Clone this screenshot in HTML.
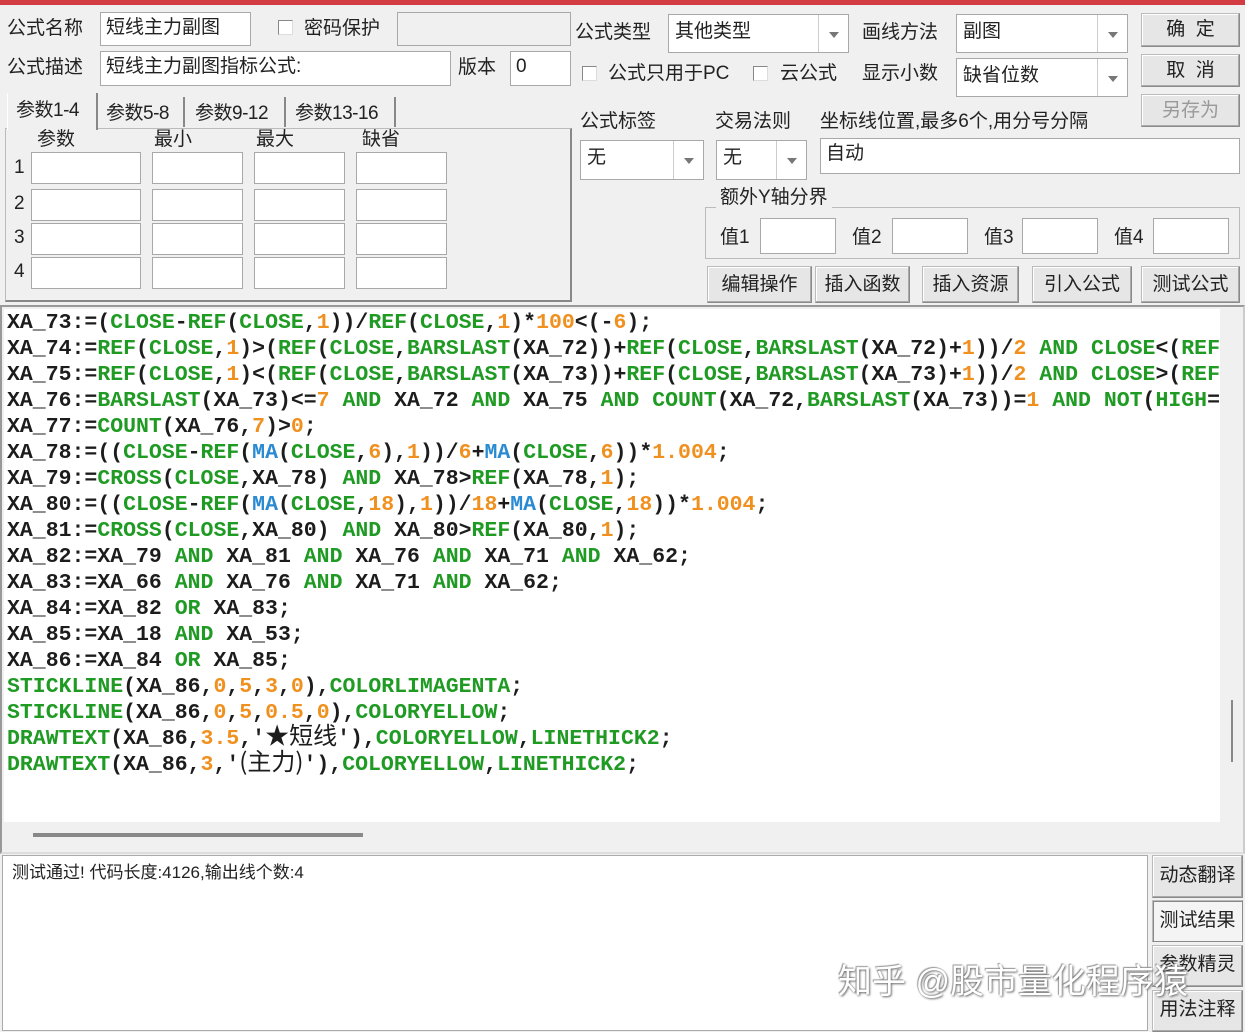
<!DOCTYPE html>
<html><head><meta charset="utf-8">
<style>
*{box-sizing:border-box;margin:0;padding:0}
body{width:1245px;height:1032px;background:#f0f0f0;position:relative;overflow:hidden;font-family:"Liberation Sans","Noto Sans CJK SC",sans-serif;font-size:19px;color:#222}
.a{position:absolute}
.t{position:absolute;white-space:nowrap;line-height:22px}
.in{position:absolute;background:#fff;border:1px solid #a8a8a8;padding:3px 5px;white-space:nowrap;line-height:24px}
.dis{background:#f0f0f0}
.cb{position:absolute;width:15px;height:15px;background:#fff;border:1px solid #888;border-right-color:#ddd;border-bottom-color:#ddd}
.cmb{position:absolute;background:#fff;border:1px solid #a8a8a8;padding:4px 6px;line-height:26px;white-space:nowrap}
.cmb .dd{position:absolute;right:0;top:0;bottom:0;width:30px;border-left:1px solid #ccc;background:#fff}
.cmb .dd:after{content:"";position:absolute;left:10px;top:50%;margin-top:-2px;border-left:5px solid transparent;border-right:5px solid transparent;border-top:6px solid #777}
.btn{position:absolute;background:#e6e6e6;border:1px solid #8a8a8a;border-top-color:#bbb;border-left-color:#bbb;box-shadow:inset -1px -1px 0 #aaa,inset 1px 1px 0 #fff;text-align:center;white-space:nowrap;font-size:19px}
.code{position:absolute;left:7px;top:1px;font-family:"Liberation Mono","Noto Sans CJK SC",monospace;font-weight:bold;font-size:21.5px;line-height:26px;color:#1c1c1c;white-space:pre}
.g{color:#1f9b24}.o{color:#f0901e}.b{color:#2a8bd2}
.cj{font-weight:normal;font-family:"Noto Sans CJK SC",sans-serif;font-size:24px;line-height:0}
.tab{font-size:19px;letter-spacing:-0.5px}
</style></head><body>
<div class="a" style="left:0;top:0;width:1245px;height:5px;background:#d23c42"></div>

<div class="t" style="left:7px;top:18px">公式名称</div>
<div class="in" style="left:100px;top:12px;width:151px;height:34px">短线主力副图</div>
<div class="cb" style="left:278px;top:20px"></div>
<div class="t" style="left:304px;top:18px">密码保护</div>
<div class="in dis" style="left:397px;top:12px;width:174px;height:34px"></div>
<div class="t" style="left:7px;top:57px">公式描述</div>
<div class="in" style="left:100px;top:51px;width:351px;height:35px">短线主力副图指标公式:</div>
<div class="t" style="left:458px;top:57px">版本</div>
<div class="in" style="left:510px;top:51px;width:61px;height:35px">0</div>

<div class="a" style="left:5px;top:128px;width:567px;height:174px;border:1px solid #bbb;border-right:2px solid #888;border-bottom:2px solid #888"></div>
<div class="a" style="left:7px;top:93px;width:91px;height:37px;background:#f0f0f0;border-left:1px solid #fff;border-right:2px solid #888"></div>
<div class="t tab" style="left:16px;top:100px">参数1-4</div>
<div class="t tab" style="left:106px;top:103px">参数5-8</div>
<div class="a" style="left:183px;top:97px;height:30px;border-left:2px solid #888"></div>
<div class="t tab" style="left:195px;top:103px">参数9-12</div>
<div class="a" style="left:284px;top:97px;height:30px;border-left:2px solid #888"></div>
<div class="t tab" style="left:295px;top:103px">参数13-16</div>
<div class="a" style="left:394px;top:97px;height:30px;border-left:2px solid #888"></div>
<div class="t" style="left:37px;top:129px">参数</div>
<div class="t" style="left:154px;top:129px">最小</div>
<div class="t" style="left:256px;top:129px">最大</div>
<div class="t" style="left:362px;top:129px">缺省</div>
<div class="t" style="left:14px;top:157px">1</div><div class="t" style="left:14px;top:193px">2</div><div class="t" style="left:14px;top:227px">3</div><div class="t" style="left:14px;top:261px">4</div>
<div class="in" style="left:31px;top:152px;width:110px;height:32px"></div><div class="in" style="left:152px;top:152px;width:91px;height:32px"></div><div class="in" style="left:254px;top:152px;width:91px;height:32px"></div><div class="in" style="left:356px;top:152px;width:91px;height:32px"></div>
<div class="in" style="left:31px;top:189px;width:110px;height:32px"></div><div class="in" style="left:152px;top:189px;width:91px;height:32px"></div><div class="in" style="left:254px;top:189px;width:91px;height:32px"></div><div class="in" style="left:356px;top:189px;width:91px;height:32px"></div>
<div class="in" style="left:31px;top:223px;width:110px;height:32px"></div><div class="in" style="left:152px;top:223px;width:91px;height:32px"></div><div class="in" style="left:254px;top:223px;width:91px;height:32px"></div><div class="in" style="left:356px;top:223px;width:91px;height:32px"></div>
<div class="in" style="left:31px;top:257px;width:110px;height:32px"></div><div class="in" style="left:152px;top:257px;width:91px;height:32px"></div><div class="in" style="left:254px;top:257px;width:91px;height:32px"></div><div class="in" style="left:356px;top:257px;width:91px;height:32px"></div>

<div class="t" style="left:575px;top:22px">公式类型</div>
<div class="cmb" style="left:668px;top:14px;width:181px;height:39px">其他类型<span class="dd"></span></div>
<div class="t" style="left:862px;top:22px">画线方法</div>
<div class="cmb" style="left:956px;top:14px;width:172px;height:39px">副图<span class="dd"></span></div>
<div class="btn" style="left:1141px;top:13px;width:99px;height:34px;line-height:32px">确&nbsp;&nbsp;定</div>
<div class="cb" style="left:582px;top:66px"></div>
<div class="t" style="left:608px;top:63px">公式只用于PC</div>
<div class="cb" style="left:753px;top:66px"></div>
<div class="t" style="left:780px;top:63px">云公式</div>
<div class="t" style="left:862px;top:63px">显示小数</div>
<div class="cmb" style="left:956px;top:58px;width:172px;height:39px">缺省位数<span class="dd"></span></div>
<div class="btn" style="left:1141px;top:54px;width:99px;height:33px;line-height:31px">取&nbsp;&nbsp;消</div>
<div class="btn" style="left:1141px;top:94px;width:99px;height:33px;line-height:31px;color:#999">另存为</div>

<div class="t" style="left:580px;top:111px">公式标签</div>
<div class="t" style="left:715px;top:111px">交易法则</div>
<div class="t" style="left:820px;top:111px">坐标线位置,最多6个,用分号分隔</div>
<div class="cmb" style="left:580px;top:140px;width:124px;height:40px">无<span class="dd"></span></div>
<div class="cmb" style="left:716px;top:140px;width:91px;height:40px">无<span class="dd"></span></div>
<div class="in" style="left:820px;top:138px;width:420px;height:36px">自动</div>

<div class="a" style="left:705px;top:207px;width:535px;height:52px;border:1px solid #bbb"></div>
<div class="t" style="left:716px;top:187px;background:#f0f0f0;padding:0 4px">额外Y轴分界</div>
<div class="t" style="left:720px;top:227px">值1</div><div class="in" style="left:760px;top:218px;width:76px;height:36px"></div>
<div class="t" style="left:852px;top:227px">值2</div><div class="in" style="left:892px;top:218px;width:76px;height:36px"></div>
<div class="t" style="left:984px;top:227px">值3</div><div class="in" style="left:1022px;top:218px;width:76px;height:36px"></div>
<div class="t" style="left:1114px;top:227px">值4</div><div class="in" style="left:1153px;top:218px;width:76px;height:36px"></div>

<div class="btn" style="left:707px;top:266px;width:105px;height:37px;line-height:35px">编辑操作</div>
<div class="btn" style="left:815px;top:266px;width:95px;height:37px;line-height:35px">插入函数</div>
<div class="btn" style="left:922px;top:266px;width:97px;height:37px;line-height:35px">插入资源</div>
<div class="btn" style="left:1032px;top:266px;width:100px;height:37px;line-height:35px">引入公式</div>
<div class="btn" style="left:1141px;top:266px;width:99px;height:37px;line-height:35px">测试公式</div>

<div class="a" style="left:0;top:305px;width:1245px;height:549px;border:2px solid #999;border-right-color:#ccc;border-bottom-color:#ddd;background:#f0f0f0"></div>
<div class="a" style="left:4px;top:309px;width:1216px;height:513px;background:#fff"></div>
<div class="a" style="left:1231px;top:700px;width:2px;height:62px;background:#888"></div>
<div class="a" style="left:33px;top:833px;width:330px;height:4px;background:#888"></div>
<div class="a" style="left:4px;top:309px;width:1216px;height:513px;overflow:hidden"><div class="code" style="left:3px"><span>XA_73:=(<span class="g">CLOSE</span>-<span class="g">REF</span>(<span class="g">CLOSE</span>,<span class="o">1</span>))/<span class="g">REF</span>(<span class="g">CLOSE</span>,<span class="o">1</span>)*<span class="o">100</span>&lt;(-<span class="o">6</span>);</span>
XA_74:=<span class="g">REF</span>(<span class="g">CLOSE</span>,<span class="o">1</span>)&gt;(<span class="g">REF</span>(<span class="g">CLOSE</span>,<span class="g">BARSLAST</span>(XA_72))+<span class="g">REF</span>(<span class="g">CLOSE</span>,<span class="g">BARSLAST</span>(XA_72)+<span class="o">1</span>))/<span class="o">2</span> <span class="g">AND</span> <span class="g">CLOSE</span>&lt;(<span class="g">REF</span>
XA_75:=<span class="g">REF</span>(<span class="g">CLOSE</span>,<span class="o">1</span>)&lt;(<span class="g">REF</span>(<span class="g">CLOSE</span>,<span class="g">BARSLAST</span>(XA_73))+<span class="g">REF</span>(<span class="g">CLOSE</span>,<span class="g">BARSLAST</span>(XA_73)+<span class="o">1</span>))/<span class="o">2</span> <span class="g">AND</span> <span class="g">CLOSE</span>&gt;(<span class="g">REF</span>
XA_76:=<span class="g">BARSLAST</span>(XA_73)&lt;=<span class="o">7</span> <span class="g">AND</span> XA_72 <span class="g">AND</span> XA_75 <span class="g">AND</span> <span class="g">COUNT</span>(XA_72,<span class="g">BARSLAST</span>(XA_73))=<span class="o">1</span> <span class="g">AND</span> <span class="g">NOT</span>(<span class="g">HIGH</span>=
XA_77:=<span class="g">COUNT</span>(XA_76,<span class="o">7</span>)&gt;<span class="o">0</span>;
XA_78:=((<span class="g">CLOSE</span>-<span class="g">REF</span>(<span class="b">MA</span>(<span class="g">CLOSE</span>,<span class="o">6</span>),<span class="o">1</span>))/<span class="o">6</span>+<span class="b">MA</span>(<span class="g">CLOSE</span>,<span class="o">6</span>))*<span class="o">1.004</span>;
XA_79:=<span class="g">CROSS</span>(<span class="g">CLOSE</span>,XA_78) <span class="g">AND</span> XA_78&gt;<span class="g">REF</span>(XA_78,<span class="o">1</span>);
XA_80:=((<span class="g">CLOSE</span>-<span class="g">REF</span>(<span class="b">MA</span>(<span class="g">CLOSE</span>,<span class="o">18</span>),<span class="o">1</span>))/<span class="o">18</span>+<span class="b">MA</span>(<span class="g">CLOSE</span>,<span class="o">18</span>))*<span class="o">1.004</span>;
XA_81:=<span class="g">CROSS</span>(<span class="g">CLOSE</span>,XA_80) <span class="g">AND</span> XA_80&gt;<span class="g">REF</span>(XA_80,<span class="o">1</span>);
XA_82:=XA_79 <span class="g">AND</span> XA_81 <span class="g">AND</span> XA_76 <span class="g">AND</span> XA_71 <span class="g">AND</span> XA_62;
XA_83:=XA_66 <span class="g">AND</span> XA_76 <span class="g">AND</span> XA_71 <span class="g">AND</span> XA_62;
XA_84:=XA_82 <span class="g">OR</span> XA_83;
XA_85:=XA_18 <span class="g">AND</span> XA_53;
XA_86:=XA_84 <span class="g">OR</span> XA_85;
<span class="g">STICKLINE</span>(XA_86,<span class="o">0</span>,<span class="o">5</span>,<span class="o">3</span>,<span class="o">0</span>),<span class="g">COLORLIMAGENTA</span>;
<span class="g">STICKLINE</span>(XA_86,<span class="o">0</span>,<span class="o">5</span>,<span class="o">0.5</span>,<span class="o">0</span>),<span class="g">COLORYELLOW</span>;
<span class="g">DRAWTEXT</span>(XA_86,<span class="o">3.5</span>,'<span class="cj">★短线</span>'),<span class="g">COLORYELLOW</span>,<span class="g">LINETHICK2</span>;
<span class="g">DRAWTEXT</span>(XA_86,<span class="o">3</span>,'<span class="cj">(主力)</span>'),<span class="g">COLORYELLOW</span>,<span class="g">LINETHICK2</span>;</div></div>

<div class="a" style="left:2px;top:855px;width:1146px;height:176px;background:#fff;border:1px solid #aaa"></div>
<div class="t" style="left:12px;top:862px;font-size:17px">测试通过! 代码长度:4126,输出线个数:4</div>
<div class="btn" style="left:1152px;top:855px;width:91px;height:43px;line-height:40px">动态翻译</div>
<div class="btn" style="left:1152px;top:900px;width:91px;height:42px;line-height:40px;background:#f4f4f4;box-shadow:inset 1px 1px 0 #888">测试结果</div>
<div class="btn" style="left:1152px;top:945px;width:91px;height:42px;line-height:38px">参数精灵</div>
<div class="btn" style="left:1152px;top:990px;width:91px;height:42px;line-height:38px">用法注释</div>
<div class="t" style="left:838px;top:962px;font-size:34px;line-height:40px;color:#fff;text-shadow:1px 1px 2px #666,-1px -1px 1px #999">知乎 @股市量化程序猿</div>
</body></html>
